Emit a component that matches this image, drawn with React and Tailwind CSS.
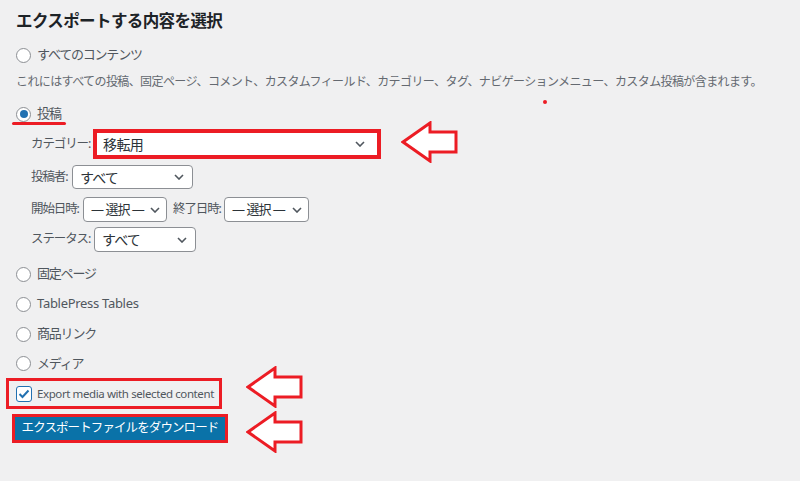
import React from "react";

const font = { fontFamily: '"Noto Sans", "Noto Sans CJK JP", sans-serif' };

const Chevron = () => (
  <svg width="10" height="6" viewBox="0 0 10 6" className="shrink-0">
    <path d="M1 1 L5 5 L9 1" fill="none" stroke="#50575e" strokeWidth="1.6" />
  </svg>
);

const Select = ({ value, className = "" }) => (
  <div
    className={`h-full shrink-0 whitespace-nowrap flex items-center justify-between bg-white border border-[#8c8f94] rounded-[4px] pl-[7px] pr-[8px] text-[#2c3338] ${className}`}
  >
    <span>{value}</span>
    <Chevron />
  </div>
);

const Radio = ({ checked }) => (
  <span className="w-[15px] h-[15px] rounded-full bg-white border border-[#8c8f94] flex items-center justify-center shrink-0">
    {checked && <span className="w-[8px] h-[8px] rounded-full bg-[#2271b1]" />}
  </span>
);

const RadioRow = ({ label, checked, className = "" }) => (
  <div className={`flex items-center gap-[6px] text-[13px] text-[#50575e] whitespace-nowrap ${className}`}>
    <Radio checked={checked} />
    <span>{label}</span>
  </div>
);

const Label = ({ children, className = "" }) => (
  <span className={`shrink-0 whitespace-nowrap ${className}`}>{children}</span>
);

const Arrow = ({ className }) => (
  <svg width="58" height="42" viewBox="0 0 58 42" className={`absolute ${className}`}>
    <polygon
      points="2,21 29,2 29,11 55,11 55,31 29,31 29,40"
      fill="white"
      stroke="#ec1c24"
      strokeWidth="3"
      strokeLinejoin="miter"
    />
  </svg>
);

export default function App() {
  return (
    <div className="relative w-[800px] h-[481px] bg-[#f0f0f1] overflow-hidden" style={font}>
      <div className="pl-[16px] flex flex-col">
        {/* HEADING */}
        <h2 className="mt-[8px] h-[26px] flex items-center text-[16.5px] font-bold text-[#1d2327] tracking-[-0.6px] whitespace-nowrap">
          エクスポートする内容を選択
        </h2>

        <RadioRow label="すべてのコンテンツ" className="mt-[6px] h-[30px] tracking-[-1.2px]" />

        <p className="h-[24px] flex items-center text-[12px] text-[#646970] tracking-[-0.6px] whitespace-nowrap">
          これにはすべての投稿、固定ページ、コメント、カスタムフィールド、カテゴリー、タグ、ナビゲーションメニュー、カスタム投稿が含まれます。
        </p>

        {/* POSTS */}
        <div className="relative mt-[5px] h-[30px] flex items-center">
          <RadioRow label="投稿" checked className="tracking-[-1px]" />
          <span className="absolute left-[-4px] top-[23px] w-[54px] h-[3px] rounded-full bg-[#ec1c24]" />
        </div>

        <div className="pl-[15px] flex flex-col text-[12.5px] text-[#50575e] tracking-[-1.1px]">
          <div className="h-[30px] flex items-center gap-[3px]">
            <Label className="w-[59px]">カテゴリー:</Label>
            <div className="h-full w-[288px] shrink-0 border-[4px] border-[#ec1c24] bg-white">
              <div className="h-full flex items-center justify-between pl-[6px] pr-[12px] text-[14px] text-[#2c3338] tracking-[-0.6px]">
                <span>移転用</span>
                <Chevron />
              </div>
            </div>
          </div>

          <div className="mt-[6px] h-[24px] flex items-center gap-[3px]">
            <Label className="w-[38px]">投稿者:</Label>
            <Select value="すべて" className="w-[121px] text-[14px] tracking-[-0.8px]" />
          </div>

          <div className="mt-[8px] h-[25px] flex items-center gap-[3px]">
            <Label className="w-[49px]">開始日時:</Label>
            <Select value="— 選択 —" className="w-[84px] text-[13px] tracking-[-1px] !pr-[6px]" />
            <Label className="ml-[3px] w-[48px]">終了日時:</Label>
            <Select value="— 選択 —" className="w-[85px] text-[13px] tracking-[-1px] !pr-[6px]" />
          </div>

          <div className="mt-[5px] h-[25px] flex items-center gap-[3px]">
            <Label className="w-[60px]">ステータス:</Label>
            <Select value="すべて" className="w-[102px] text-[14px] tracking-[-0.8px]" />
          </div>
        </div>

        <RadioRow label="固定ページ" className="mt-[7px] h-[30px] tracking-[-1.2px]" />
        <RadioRow label="TablePress Tables" className="h-[30px] tracking-[-0.3px]" />
        <RadioRow label="商品リンク" className="h-[30px] tracking-[-1.2px]" />
        <RadioRow label="メディア" className="h-[29px] tracking-[-1.2px]" />

        {/* MEDIA CHECKBOX */}
        <div className="-ml-[10px] w-[216px] h-[31px] border-[3px] border-[#ec1c24] flex items-center pl-[7px] gap-[5px] whitespace-nowrap">
          <span className="w-[16px] h-[16px] shrink-0 rounded-[3px] bg-white border border-[#2271b1] flex items-center justify-center">
            <svg width="12" height="10" viewBox="0 0 12 10">
              <path d="M1.5 5 L4.5 8 L10.5 1.5" fill="none" stroke="#2271b1" strokeWidth="2" />
            </svg>
          </span>
          <span className="text-[11.5px] text-[#50575e] tracking-[-0.4px]">Export media with selected content</span>
        </div>

        {/* DOWNLOAD BUTTON */}
        <div className="-ml-[4px] mt-[5px] w-[216px] h-[29px] border-[3px] border-[#ec1c24] flex">
          <button className="flex-1 bg-[#0a72a8] text-white text-[12.5px] tracking-[-0.9px] whitespace-nowrap flex items-center justify-center">
            エクスポートファイルをダウンロード
          </button>
        </div>
      </div>

      {/* ANNOTATIONS */}
      <Arrow className="left-[401px] top-[121px]" />
      <Arrow className="left-[246px] top-[366px]" />
      <Arrow className="left-[246px] top-[411px]" />
      <span className="absolute left-[543px] top-[100px] w-[4px] h-[4px] rounded-full bg-[#ec1c24]" />
    </div>
  );
}
